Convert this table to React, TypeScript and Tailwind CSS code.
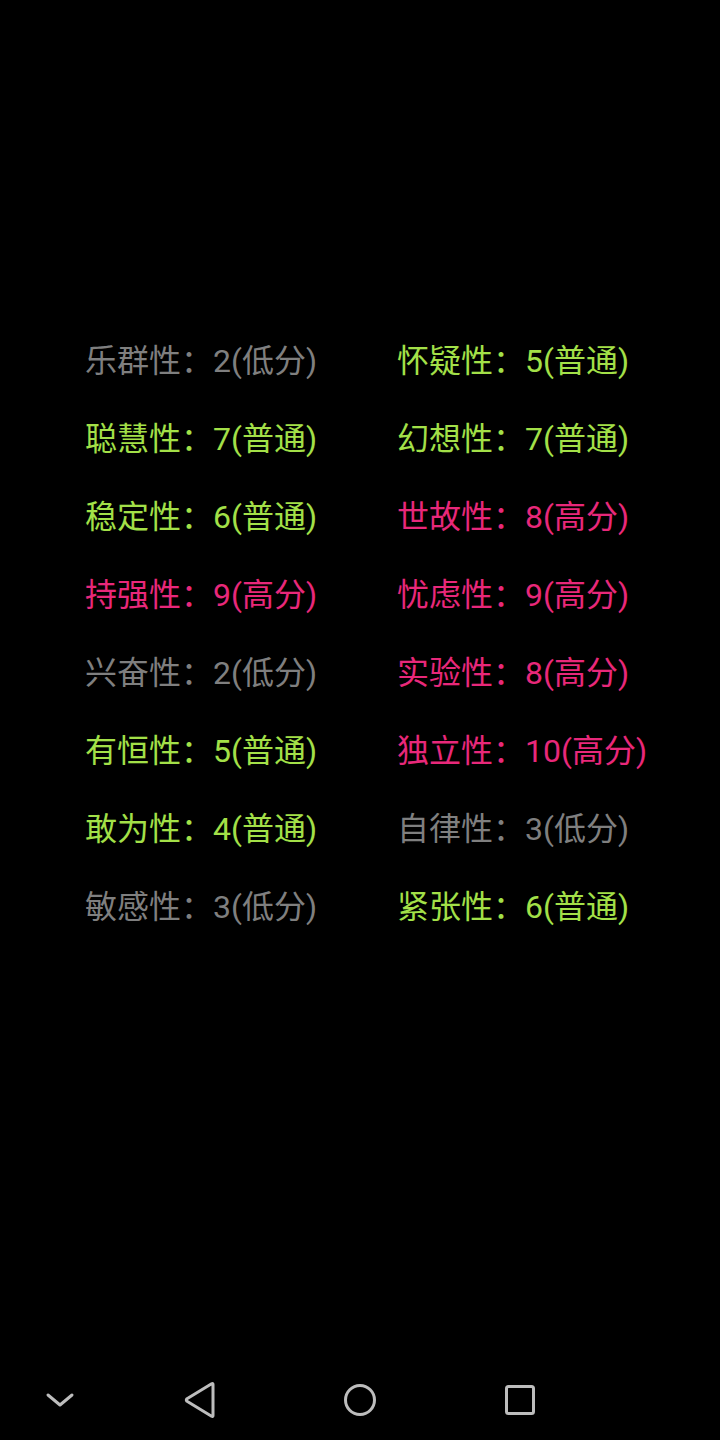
const GRAY = "text-[#7f7f7f]";
const GREEN = "text-[#a3e048]";
const PINK = "text-[#e8287a]";

type Trait = { name: string; score: number };

const left: Trait[] = [
  { name: "乐群性", score: 2 },
  { name: "聪慧性", score: 7 },
  { name: "稳定性", score: 6 },
  { name: "持强性", score: 9 },
  { name: "兴奋性", score: 2 },
  { name: "有恒性", score: 5 },
  { name: "敢为性", score: 4 },
  { name: "敏感性", score: 3 },
];

const right: Trait[] = [
  { name: "怀疑性", score: 5 },
  { name: "幻想性", score: 7 },
  { name: "世故性", score: 8 },
  { name: "忧虑性", score: 9 },
  { name: "实验性", score: 8 },
  { name: "独立性", score: 10 },
  { name: "自律性", score: 3 },
  { name: "紧张性", score: 6 },
];

function level(score: number) {
  if (score <= 3) return { label: "低分", color: GRAY };
  if (score >= 8) return { label: "高分", color: PINK };
  return { label: "普通", color: GREEN };
}

function TraitRow({ trait }: { trait: Trait }) {
  const l = level(trait.score);
  return (
    <div className={`h-[78px] flex items-center whitespace-nowrap ${l.color}`}>
      {trait.name}：{trait.score}({l.label})
    </div>
  );
}

export default function App() {
  return (
    <div
      className="w-[720px] h-[1440px] bg-black flex flex-col text-[32px] leading-none"
      style={{ fontFamily: 'Roboto, "Noto Sans CJK SC", sans-serif' }}
    >
      <div className="flex-1 pt-[322px] pl-[85px]">
        <div className="grid grid-cols-[312px_312px]">
          <div className="flex flex-col">
            {left.map((t) => (
              <TraitRow key={t.name} trait={t} />
            ))}
          </div>
          <div className="flex flex-col">
            {right.map((t) => (
              <TraitRow key={t.name} trait={t} />
            ))}
          </div>
        </div>
      </div>

      {/* nav bar */}
      <div className="h-[80px] flex items-center text-[#bdbdbd]">
        <div className="w-[120px] flex justify-center">
          <svg width="30" height="16" viewBox="0 0 30 16" fill="none" stroke="currentColor" strokeWidth="3" strokeLinecap="round" strokeLinejoin="round">
            <path d="M3 3 L15 13 L27 3" />
          </svg>
        </div>
        <div className="w-[160px] flex justify-center">
          <svg width="34" height="38" viewBox="0 0 34 38" fill="none" stroke="currentColor" strokeWidth="3" strokeLinejoin="round">
            <path d="M30 3.5 L30 34.5 Q30 36 28.6 35.2 L4 20.3 Q2.6 19 4 17.7 L28.6 2.8 Q30 2 30 3.5 Z" />
          </svg>
        </div>
        <div className="w-[160px] flex justify-center">
          <svg width="34" height="34" viewBox="0 0 34 34" fill="none" stroke="currentColor" strokeWidth="3">
            <circle cx="17" cy="17" r="14.5" />
          </svg>
        </div>
        <div className="w-[160px] flex justify-center">
          <svg width="32" height="32" viewBox="0 0 32 32" fill="none" stroke="currentColor" strokeWidth="3">
            <rect x="2.5" y="2.5" width="27" height="27" rx="2" />
          </svg>
        </div>
      </div>
    </div>
  );
}
